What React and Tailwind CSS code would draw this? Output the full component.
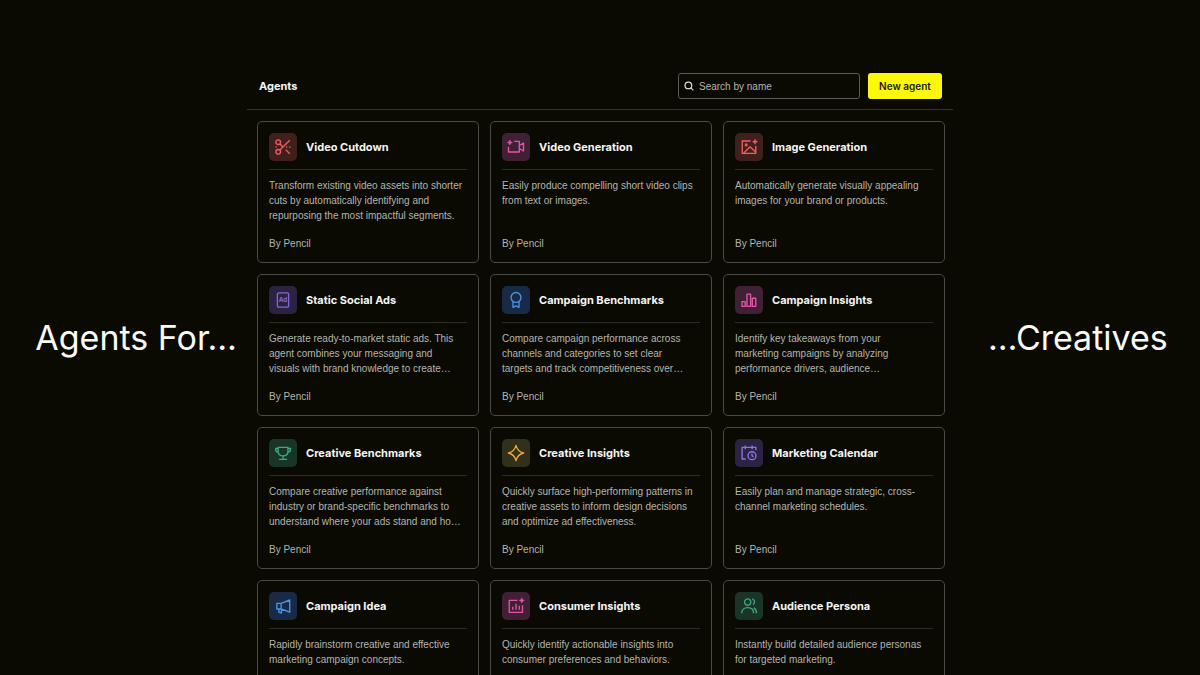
import { useState } from "react";

const Sparkle = ({ x, y }) => (
  <path
    d={`M${x} ${y - 3.4}l1 2.4 2.4 1-2.4 1-1 2.4-1-2.4-2.4-1 2.4-1z`}
    fill="currentColor"
    strokeWidth="0.8"
  />
);

const icons = {
  scissors: (
    <>
      <circle cx="5.6" cy="5.6" r="3.1" />
      <circle cx="5.6" cy="18.4" r="3.1" />
      <path d="M7.9 7.9 12 12M15.5 15.5l5.5 5.5M21 3 7.9 16.1M2 12h1.6M16 12h1.6M20.4 12H22" />
    </>
  ),
  video: (
    <>
      <path d="M9.5 4.5h6.9v14.2H2V11.5M16.4 10l5.6-3.3v10.6L16.4 14" />
      <Sparkle x={3.8} y={6} />
    </>
  ),
  image: (
    <>
      <path d="M14 4H3v16.5h18V10.5M5 20l8.5-8.2L21 19" />
      <circle cx="8.3" cy="9.2" r="1.2" />
      <Sparkle x={20} y={5} />
    </>
  ),
  ad: (
    <>
      <rect x="4.5" y="2.5" width="15" height="19" rx="2" />
      <text
        x="12"
        y="15"
        textAnchor="middle"
        fontSize="8.5"
        fontWeight="700"
        fill="currentColor"
        stroke="none"
      >
        Ad
      </text>
    </>
  ),
  ribbon: (
    <>
      <circle cx="12" cy="8.6" r="6.6" />
      <path d="M8 14.2v7.6l4-2 4 2v-7.6" />
    </>
  ),
  bars: (
    <path d="M2.7 14.2h4.2v6.3H2.7zM9.3 4.2h4.8v16.3H9.3zM16.4 9.6h4.6v10.9h-4.6z" />
  ),
  trophy: (
    <path d="M5.6 4.5h13v5.5c0 3.6-2.4 5.8-6.5 5.8S5.6 13.6 5.6 10zM5.6 6H2.2v1.5c0 1.8 1.2 3 3.4 3M18.6 6H22v1.5c0 1.8-1.2 3-3.4 3M12.1 15.8v4.7M6.8 20.5h10.6" />
  ),
  star: (
    <path d="M12 1.8c1.4 6 4.2 8.8 10.2 10.2-6 1.4-8.8 4.2-10.2 10.2C10.6 16.2 7.8 13.4 1.8 12 7.8 10.6 10.6 7.8 12 1.8z" />
  ),
  calendar: (
    <>
      <path d="M7.5 20H2.8V4.5h18.4v3.8M7 2v5M16.2 2v5" />
      <circle cx="16" cy="15.6" r="5.3" />
      <path d="M16 12.8v3l2 1.2" />
    </>
  ),
  megaphone: (
    <path d="M9.5 8.5H3.8V16h5.7M9.5 8.5 21 4v16.3L9.5 16zM6.5 16v4.2l3.4 1.3V16.3" />
  ),
  insights: (
    <>
      <path d="M14 4.5H3v16h17.6V11M7.6 13v4M12 9v8M16.4 11.5V17" />
      <Sparkle x={19.7} y={4.5} />
    </>
  ),
  persona: (
    <path d="M10.2 2.6a4.2 4.2 0 1 0 .1 0zM2.3 21.6c0-4.6 3.2-7.4 7.9-7.4s7.9 2.8 7.9 7.4M16.2 2.6c3.2.6 4.4 5 1.4 7.6M18.4 14.4c2.2 1.2 3.6 3.6 3.6 7.2" />
  ),
};

const agents = [
  {
    icon: "scissors",
    tone: "bg-[#40201d] text-[#ee5f5f]",
    title: "Video Cutdown",
    text: "Transform existing video assets into shorter\ncuts by automatically identifying and\nrepurposing the most impactful segments.",
  },
  {
    icon: "video",
    tone: "bg-[#3f2035] text-[#e455a8]",
    title: "Video Generation",
    text: "Easily produce compelling short video clips\nfrom text or images.",
  },
  {
    icon: "image",
    tone: "bg-[#40201d] text-[#ee5f5f]",
    title: "Image Generation",
    text: "Automatically generate visually appealing\nimages for your brand or products.",
  },
  {
    icon: "ad",
    tone: "bg-[#2b2341] text-[#8268d6]",
    title: "Static Social Ads",
    text: "Generate ready-to-market static ads. This\nagent combines your messaging and\nvisuals with brand knowledge to create…",
  },
  {
    icon: "ribbon",
    tone: "bg-[#182a45] text-[#4a93e6]",
    title: "Campaign Benchmarks",
    text: "Compare campaign performance across\nchannels and categories to set clear\ntargets and track competitiveness over…",
  },
  {
    icon: "bars",
    tone: "bg-[#3f2035] text-[#e455a8]",
    title: "Campaign Insights",
    text: "Identify key takeaways from your\nmarketing campaigns by analyzing\nperformance drivers, audience…",
  },
  {
    icon: "trophy",
    tone: "bg-[#1a3528] text-[#3faa7c]",
    title: "Creative Benchmarks",
    text: "Compare creative performance against\nindustry or brand-specific benchmarks to\nunderstand where your ads stand and ho…",
  },
  {
    icon: "star",
    tone: "bg-[#32301a] text-[#eba53c]",
    title: "Creative Insights",
    text: "Quickly surface high-performing patterns in\ncreative assets to inform design decisions\nand optimize ad effectiveness.",
  },
  {
    icon: "calendar",
    tone: "bg-[#2b2341] text-[#8f74e6]",
    title: "Marketing Calendar",
    text: "Easily plan and manage strategic, cross-\nchannel marketing schedules.",
  },
  {
    icon: "megaphone",
    tone: "bg-[#182a45] text-[#4a93e6]",
    title: "Campaign Idea",
    text: "Rapidly brainstorm creative and effective\nmarketing campaign concepts.",
  },
  {
    icon: "insights",
    tone: "bg-[#3f2035] text-[#e455a8]",
    title: "Consumer Insights",
    text: "Quickly identify actionable insights into\nconsumer preferences and behaviors.",
  },
  {
    icon: "persona",
    tone: "bg-[#1a3528] text-[#3faa7c]",
    title: "Audience Persona",
    text: "Instantly build detailed audience personas\nfor targeted marketing.",
  },
];

const AgentCard = ({ agent }) => (
  <article className="rounded-[5px] border border-[#4a4a46] p-[11px]">
    <div className="flex items-center gap-[9px] border-b border-[#2c2c28] pb-2">
      <span
        className={`flex size-7 shrink-0 items-center justify-center rounded-[5px] ${agent.tone}`}
      >
        <svg
          viewBox="0 0 24 24"
          className="size-[18px]"
          fill="none"
          stroke="currentColor"
          strokeWidth="1.8"
          strokeLinejoin="round"
          aria-hidden="true"
        >
          {icons[agent.icon]}
        </svg>
      </span>
      <h2 className="whitespace-nowrap text-[11px] font-bold leading-[15px] text-[#f5f5f2]">
        {agent.title}
      </h2>
    </div>
    <div className="mt-2 font-['Liberation_Sans',sans-serif] text-[10px] leading-[15px] text-[#b4b4b0]">
      <p className="h-[45px] whitespace-pre">{agent.text}</p>
      <p className="mt-[13px]">By Pencil</p>
    </div>
  </article>
);

const App = () => {
  const [search, setSearch] = useState("");

  const shown = agents.filter((agent) =>
    agent.title.toLowerCase().includes(search.toLowerCase())
  );

  return (
    <div className="grid h-screen grid-cols-[247fr_706fr_247fr] grid-rows-1 overflow-hidden bg-[#0a0a02] font-['Inter',sans-serif]">
      <div className="flex items-center justify-end pr-[10px]">
        <p className="whitespace-nowrap text-[34px] leading-[40px] text-[#fafaf5]">
          Agents For…
        </p>
      </div>

      <main className="min-h-0 pt-[73px]">
        <header className="flex items-center gap-2 border-b border-[#33332f] pb-[10px] pl-3 pr-[11px]">
          <h1 className="mr-auto text-[11px] font-bold leading-[15px] text-[#f5f5f2]">
            Agents
          </h1>
          <label className="flex h-[26px] w-[182px] items-center gap-[5px] rounded-[3px] border border-[#5a5a56] px-[5px]">
            <svg
              viewBox="0 0 24 24"
              className="size-[10px] shrink-0 text-[#d8d8d4]"
              fill="none"
              stroke="currentColor"
              strokeWidth="3"
              aria-hidden="true"
            >
              <circle cx="10.5" cy="10.5" r="8" />
              <path d="m16.5 16.5 6 6" />
            </svg>
            <input
              type="text"
              aria-label="Search by name"
              placeholder="Search by name"
              value={search}
              onChange={(e) => setSearch(e.target.value)}
              className="w-full bg-transparent font-['Liberation_Sans',sans-serif] text-[10px] leading-[15px] text-[#f5f5f2] placeholder:text-[#b4b4b0] focus:outline-none"
            />
          </label>
          <button
            type="button"
            className="h-[26px] w-[74px] whitespace-nowrap rounded-[3px] bg-[#fdf80b] text-[10px] font-semibold leading-[15px] text-[#1c1c04]"
          >
            New agent
          </button>
        </header>

        <section className="grid grid-cols-3 gap-[11px] pl-[10px] pr-2 pt-[11px]">
          {shown.map((agent) => (
            <AgentCard key={agent.title} agent={agent} />
          ))}
        </section>
      </main>

      <div className="flex items-center pl-[35px]">
        <p className="whitespace-nowrap text-[34px] leading-[40px] text-[#fafaf5]">
          …Creatives
        </p>
      </div>
    </div>
  );
};

export default App;
